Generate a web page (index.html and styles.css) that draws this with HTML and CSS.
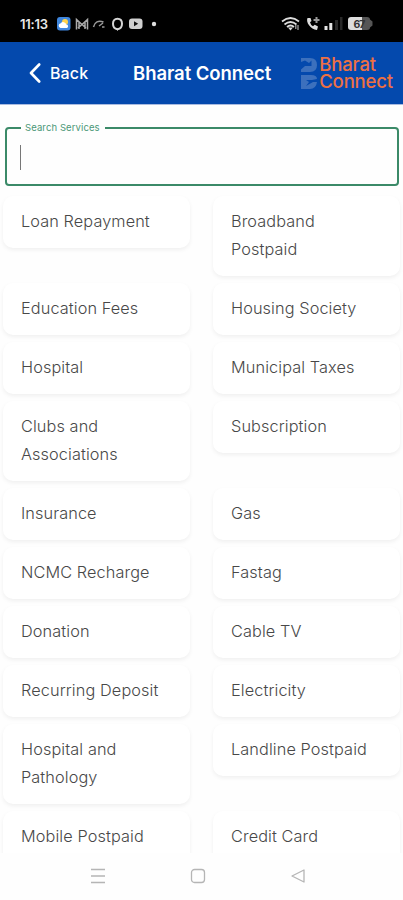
FILE: index.html
```
<!DOCTYPE html>
<html lang="en">
<head>
<meta charset="utf-8">
<meta name="viewport" content="width=device-width, initial-scale=1">
<title>Bharat Connect</title>
<link rel="stylesheet" href="styles.css">
</head>
<body>
<div class="status">
  <span class="time">11:13</span>
  <svg class="apps" width="104" height="16" viewBox="0 0 104 16">
    <rect x="1" y="1" width="13.500" height="13.500" rx="3" fill="#3f86dd"/>
    <circle cx="9" cy="6" r="3" fill="#ffd34d"/>
    <path d="M4.500 12a2.400 2.400 0 0 1 .2-4.700 3.200 3.200 0 0 1 5.600 1.200 1.800 1.800 0 0 1 .6 3.500z" fill="#fff"/>
    <path d="M20.500 13.500V3.500l5.500 5 5.500-5v10M23 13V6M29 13V6M22 12l4-3.500 4 3.500" fill="none" stroke="#aaa" stroke-width="1.500"/>
    <path d="M37.500 11c1-5 5-7 10-5M43 10l4-3M46 11h2.500" fill="none" stroke="#999" stroke-width="1.500"/>
    <path d="M61.500 2.800q4.500 0 4.500 5t-4.500 5.400q-4.500-.4-4.500-5.400t4.500-5z" fill="none" stroke="#d5d5d5" stroke-width="2"/>
    <path d="M60 12.500h3l-1.500 2.500z" fill="#d5d5d5"/>
    <rect x="73" y="2.500" width="13.500" height="10.500" rx="3" fill="#d0d0d0"/>
    <path d="M78 5.300v5l4.200-2.500z" fill="#111"/>
    <circle cx="98" cy="8" r="2.200" fill="#ddd"/>
  </svg>
  <svg class="signals" width="96" height="18" viewBox="0 0 96 18">
    <g fill="none" stroke="#ddd" stroke-width="1.700">
      <path d="M2 6.500q8.500-7 17 0M4.500 9.500q6-5 12 0M7 12q3.500-3 7 0"/>
    </g>
    <path d="M8 12.500h5l-2.500 3z" fill="#ddd"/>
    <path d="M15.800 14V10M18 10v5" stroke="#aaa" stroke-width="1.200"/>
    <path d="M27.500 3c-2 4 3 11.500 9.500 12l1-3.500-3.300-1.700-1.700 1.500q-2.500-1.500-3-4L31.500 6 30.500 3z" fill="#ddd"/>
    <path d="M33.500 5h6M36.500 2v6" stroke="#999" stroke-width="2"/>
    <path d="M44.500 11h3v4h-3zM49.300 8h3v7h-3z" fill="#e5e5e5"/>
    <path d="M55 5h3v10h-3zM60 2h2.500v13H60z" fill="#292929"/>
    <path d="M82 2h5q3 0 3 2.500l2.500 2v4l-2.500 2q0 2.500-3 2.500h-5z" fill="#555"/>
    <path d="M71 2h11v13H71q-3 0-3-3V5q0-3 3-3z" fill="#ddd"/>
    <text class="charge" x="73.500" y="12.500">67</text>
  </svg>
</div>
<header class="bar">
  <svg class="chevron" width="12" height="20" viewBox="0 0 12 20"><path d="M10.200 1.500L2 10l8.200 8.500" fill="none" stroke="#fff" stroke-width="2.600" stroke-linecap="round" stroke-linejoin="round"/></svg>
  <span class="back">Back</span>
  <h1 class="title">Bharat Connect</h1>
  <div class="brand">
    <svg width="17" height="33" viewBox="0 0 17 33" fill="#3c70bd">
      <path d="M0 1h9q7 0 7 7t-7 7H0v-2.500l4-3.500h6.500V3.500L8 6 4 3.500 0 5z"/>
      <path d="M0 18h10q6 0 6 4l-5 1H5l3 2-3 4 7-4h4q-1 7-7 7H0z"/>
    </svg>
    <div class="words"><span>Bharat</span><span>Connect</span></div>
  </div>
</header>
<main class="content">
  <fieldset class="search"><legend>Search Services</legend><div class="caret"></div></fieldset>
  <div class="grid">
    <div class="card"><span>Loan Repayment</span></div><div class="card"><span>Broadband<br>Postpaid</span></div>
    <div class="card"><span>Education Fees</span></div><div class="card"><span>Housing Society</span></div>
    <div class="card"><span>Hospital</span></div><div class="card"><span>Municipal Taxes</span></div>
    <div class="card"><span>Clubs and<br>Associations</span></div><div class="card"><span>Subscription</span></div>
    <div class="card"><span>Insurance</span></div><div class="card"><span>Gas</span></div>
    <div class="card"><span>NCMC Recharge</span></div><div class="card"><span>Fastag</span></div>
    <div class="card"><span>Donation</span></div><div class="card"><span>Cable TV</span></div>
    <div class="card"><span>Recurring Deposit</span></div><div class="card"><span>Electricity</span></div>
    <div class="card"><span>Hospital and<br>Pathology</span></div><div class="card"><span>Landline Postpaid</span></div>
    <div class="card"><span>Mobile Postpaid</span></div><div class="card"><span>Credit Card</span></div>
  </div>
</main>
<nav class="nav">
  <svg width="16" height="16" viewBox="0 0 16 16"><path d="M1 1.500h14M1 8h14M1 14.500h14" stroke="#b5b5b5" stroke-width="1.300"/></svg>
  <svg width="16" height="16" viewBox="0 0 16 16"><rect x="1.500" y="1.500" width="13" height="13" rx="3" fill="none" stroke="#b5b5b5" stroke-width="1.300"/></svg>
  <svg width="16" height="16" viewBox="0 0 16 16"><path d="M14 2v12L2 8z" fill="none" stroke="#b5b5b5" stroke-width="1.300" stroke-linejoin="round"/></svg>
</nav>
</body>
</html>
```
FILE: styles.css
```
* { box-sizing: border-box; }
body {
  margin: 0;
  width: 403px;
  height: 900px;
  overflow: hidden;
  display: flex;
  flex-direction: column;
  background: #fefefe;
  font-family: Inter, Roboto, sans-serif;
}
svg { display: block; flex: none; }
.status {
  flex: none;
  height: 42px;
  padding: 5px 27px 0 20px;
  display: flex;
  align-items: center;
  background: #000;
}
.time { width: 36px; font-size: 13px; font-weight: 600; color: #e8e8e8; letter-spacing: -.2px; white-space: nowrap; }
.signals { margin-left: auto; }
.charge { font-size: 10.5px; font-weight: 700; fill: #333; letter-spacing: -1px; }
.bar {
  flex: none;
  height: 63px;
  padding: 0 10px 0 29px;
  display: flex;
  align-items: center;
  background: #0449ad;
  border-bottom: 1px solid #a9bbe0;
  color: #fff;
  white-space: nowrap;
}
.back { width: 83px; margin-left: 9px; font-size: 16px; font-weight: 500; letter-spacing: .1px; }
.title { margin: 0; font-size: 18.5px; font-weight: 600; letter-spacing: -.05px; }
.brand { margin-left: auto; display: flex; align-items: center; gap: 1px; color: #ed7043; font-size: 18.5px; font-weight: 500; letter-spacing: -.15px; }
.words { display: flex; flex-direction: column; line-height: 17px; }
.content { flex: 1; min-height: 0; overflow: hidden; padding-top: 17px; }
.search {
  height: 64px;
  margin: 0 4px 0 5px;
  padding: 0 14px;
  border: 2px solid #3b8a68;
  border-radius: 4px;
}
.search legend { padding: 0 5px 0 4px; font-size: 9.5px; letter-spacing: .1px; line-height: 11px; color: #4b9878; }
.caret { width: 1px; height: 25px; margin-top: 12px; margin-left: -1px; background: #777; }
.grid {
  display: grid;
  grid-template-columns: 187px 187px;
  column-gap: 23px;
  row-gap: 7.200px;
  align-items: start;
  padding: 10.3px 3px 0;
}
.card {
  padding: 12px 18px;
  border-radius: 10px;
  background: #fff;
  box-shadow: 0 2px 4px rgba(0, 0, 0, .06);
  color: #484848;
  font-size: 16.300px;
  font-weight: 300;
  letter-spacing: .1px;
  line-height: 27.850px;
  white-space: nowrap;
}
.nav {
  flex: none;
  height: 47px;
  padding: 0 97px 1px 90px;
  display: flex;
  justify-content: space-between;
  align-items: center;
  background: #fefefe;
}
```
